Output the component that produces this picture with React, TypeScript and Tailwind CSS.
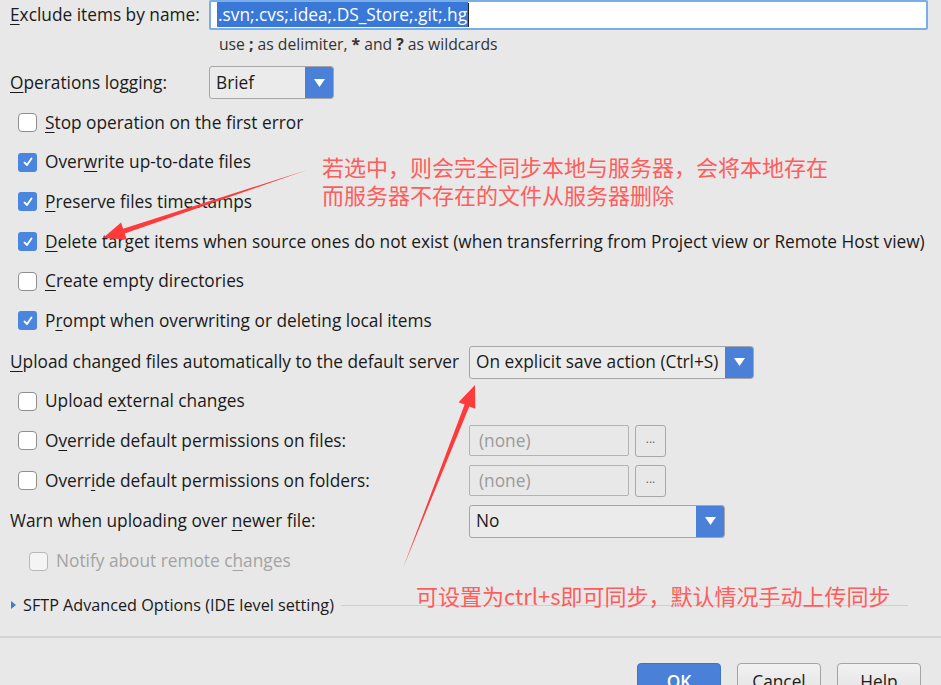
import React from "react";

const FONT = { fontFamily: '"Open Sans", "Noto Sans", sans-serif' };

function U({ children }: { children: React.ReactNode }) {
  return <span className="underline underline-offset-[3px] decoration-1">{children}</span>;
}

function CheckBox({ checked, disabled }: { checked?: boolean; disabled?: boolean }) {
  if (checked) {
    return (
      <div className="w-[19px] h-[19px] rounded-[3px] bg-[#4a85e0] flex items-center justify-center shrink-0">
        <svg width="12" height="12" viewBox="0 0 12 12">
          <path d="M2.5 6.5 L5 9 L9.5 2.5" fill="none" stroke="white" strokeWidth="1.8" strokeLinecap="round" strokeLinejoin="round" />
        </svg>
      </div>
    );
  }
  return (
    <div
      className={
        "w-[19px] h-[19px] rounded-[4px] border shrink-0 " +
        (disabled ? "border-[#b8b8b8] bg-[#f4f4f4]" : "border-[#8f8f8f] bg-white")
      }
    />
  );
}

function Combo({ text, width }: { text: string; width: string }) {
  return (
    <div className={"h-[33px] rounded-[3px] border border-[#a6a6a6] flex items-stretch bg-[#ebebeb] " + width}>
      <div className="flex-1 flex items-center pl-[6px] text-[17.3px] text-[#1a1a1a] whitespace-nowrap">{text}</div>
      <div className="w-[28px] bg-[#4a80d8] rounded-r-[2px] flex items-center justify-center">
        <svg width="11" height="8" viewBox="0 0 11 8">
          <path d="M0 0 L11 0 L5.5 8 Z" fill="white" />
        </svg>
      </div>
    </div>
  );
}

function CheckRow({ checked, children, extra }: { checked?: boolean; children: React.ReactNode; extra?: React.ReactNode }) {
  return (
    <div className="h-[39.6px] flex items-center">
      <div className="w-[469px] flex items-center pl-[18px] gap-[8px] shrink-0">
        <CheckBox checked={checked} />
        <span className="text-[17.3px] text-[#1a1a1a] whitespace-nowrap">{children}</span>
      </div>
      {extra}
    </div>
  );
}

function PermField() {
  return (
    <div className="flex items-center gap-[6px]">
      <div className="w-[160px] h-[31px] border border-[#b3b3b3] rounded-[2px] flex items-center pl-[9px] text-[17.3px] text-[#9a9a9a]">
        (none)
      </div>
      <div className="w-[31px] h-[32px] border border-[#a8a8a8] rounded-[3px] flex items-center justify-center text-[12px] text-[#666] leading-none pb-[4px]">
        ...
      </div>
    </div>
  );
}

function Button({ children, primary }: { children: React.ReactNode; primary?: boolean }) {
  return (
    <div
      className={
        "w-[84px] h-[34px] rounded-[4px] flex items-start justify-center pt-[5px] text-[17.3px] " +
        (primary
          ? "bg-[#4a80d8] border border-[#3f73c8] text-white font-semibold"
          : "bg-gradient-to-b from-[#f2f2f2] to-[#e2e2e2] border border-[#a3a3a3] text-[#1a1a1a]")
      }
    >
      {children}
    </div>
  );
}

export default function App() {
  return (
    <div className="w-[941px] h-[685px] bg-[#e8e8e8] overflow-hidden relative" style={FONT}>
      {/* Exclude row */}
      <div className="h-[30px] flex items-center">
        <div className="w-[209px] pl-[10px] text-[17.3px] text-[#1a1a1a] whitespace-nowrap">
          <U>E</U>xclude items by name:
        </div>
        <div className="w-[719px] h-[30px] -mt-[1px] bg-white border-2 border-[#7aaee8] rounded-[2px] flex items-center pl-[6px]">
          <span className="bg-[#3a78d8] text-white text-[17.3px] leading-[25px] px-[1px] whitespace-nowrap">.svn;.cvs;.idea;.DS_Store;.git;.hg</span>
          <span className="w-[1px] h-[24px] bg-[#222]" />
        </div>
      </div>
      {/* hint */}
      <div className="mt-[5px] h-[20px] pl-[219px] flex items-center text-[15.7px] text-[#333] whitespace-nowrap">
        use&nbsp;<b>;</b>&nbsp;as delimiter,&nbsp;<b>*</b>&nbsp;and&nbsp;<b>?</b>&nbsp;as wildcards
      </div>
      {/* ops logging */}
      <div className="mt-[11px] h-[33px] flex items-center">
        <div className="w-[209px] pl-[10px] text-[17.3px] text-[#1a1a1a] whitespace-nowrap">
          <U>O</U>perations logging:
        </div>
        <Combo text="Brief" width="w-[125px]" />
      </div>
      <div className="mt-[4px]">
        <CheckRow>
          <U>S</U>top operation on the first error
        </CheckRow>
        <CheckRow checked>
          Over<U>w</U>rite up-to-date files
        </CheckRow>
        <CheckRow checked>
          <U>P</U>reserve files timestamps
        </CheckRow>
        <CheckRow checked>
          <U>D</U>elete target items when source ones do not exist (when transferring from Project view or Remote Host view)
        </CheckRow>
        <CheckRow>
          <U>C</U>reate empty directories
        </CheckRow>
        <CheckRow checked>
          P<U>r</U>ompt when overwriting or deleting local items
        </CheckRow>
      </div>
      {/* upload */}
      <div className="mt-[5px] h-[33px] flex items-center">
        <div className="w-[469px] pl-[10px] text-[17.3px] text-[#1a1a1a] whitespace-nowrap">
          <U>U</U>pload changed files automatically to the default server
        </div>
        <Combo text="On explicit save action (Ctrl+S)" width="w-[285px]" />
      </div>
      <div className="mt-[3px]">
        <CheckRow>
          Upload e<U>x</U>ternal changes
        </CheckRow>
        <CheckRow extra={<PermField />}>
          O<U>v</U>erride default permissions on files:
        </CheckRow>
        <CheckRow extra={<PermField />}>
          Overr<U>i</U>de default permissions on folders:
        </CheckRow>
      </div>
      {/* warn */}
      <div className="mt-[5px] h-[32px] flex items-center">
        <div className="w-[469px] pl-[10px] text-[17.3px] text-[#1a1a1a] whitespace-nowrap">
          Warn when uploading over <U>n</U>ewer file:
        </div>
        <Combo text="No" width="w-[256px]" />
      </div>
      {/* notify */}
      <div className="mt-[4px] h-[40px] flex items-center pl-[29px] gap-[8px]">
        <CheckBox disabled />
        <span className="text-[17.3px] text-[#a3a3a3] whitespace-nowrap">
          Notify about remote c<U>h</U>anges
        </span>
      </div>
      {/* SFTP advanced */}
      <div className="mt-[12px] h-[24px] flex items-center pl-[10px]">
        <svg width="7" height="10" viewBox="0 0 7 10" className="mr-[6px]">
          <path d="M1 1 L6 5 L1 9 Z" fill="#3d7fc4" />
        </svg>
        <span className="text-[16.2px] text-[#1a1a1a] whitespace-nowrap">SFTP Advanced Options (IDE level setting)</span>
        <div className="ml-[7px] w-[567px] h-[1px] bg-[#cfcfcf]" />
      </div>
      {/* separator */}
      <div className="mt-[19px] h-[2px] bg-[#d2d2d2]" />
      {/* buttons */}
      <div className="mt-[25px] flex justify-end pr-[20px] gap-[16px]">
        <Button primary>OK</Button>
        <Button>Cancel</Button>
        <Button>Help</Button>
      </div>

      {/* annotations overlay */}
      <svg className="absolute left-0 top-0 pointer-events-none" width="941" height="685">
        <polygon
          points="307,170 123.1,228.7 121.1,222.5 103,238 126.7,239.6 124.7,233.4"
          fill="#ff3a3a"
        />
        <polygon
          points="403,568 464.6,404.5 458.6,402.2 475,385 475.3,408.75 469.3,406.4"
          fill="#ff3a3a"
        />
      </svg>
      <div
        className="absolute left-[322px] top-[154px] flex flex-col gap-[3px] text-[22px] leading-[25px] text-[#ff5c5c] whitespace-nowrap"
        style={{ fontFamily: '"Noto Sans CJK SC", sans-serif' }}
      >
        <div>若选中，则会完全同步本地与服务器，会将本地存在</div>
        <div>而服务器不存在的文件从服务器删除</div>
      </div>
      <div
        className="absolute left-[416px] top-[583px] text-[22px] leading-[25px] text-[#ff5c5c] whitespace-nowrap"
        style={{ fontFamily: '"Noto Sans CJK SC", sans-serif' }}
      >
        可设置为ctrl+s即可同步，默认情况手动上传同步
      </div>
    </div>
  );
}
